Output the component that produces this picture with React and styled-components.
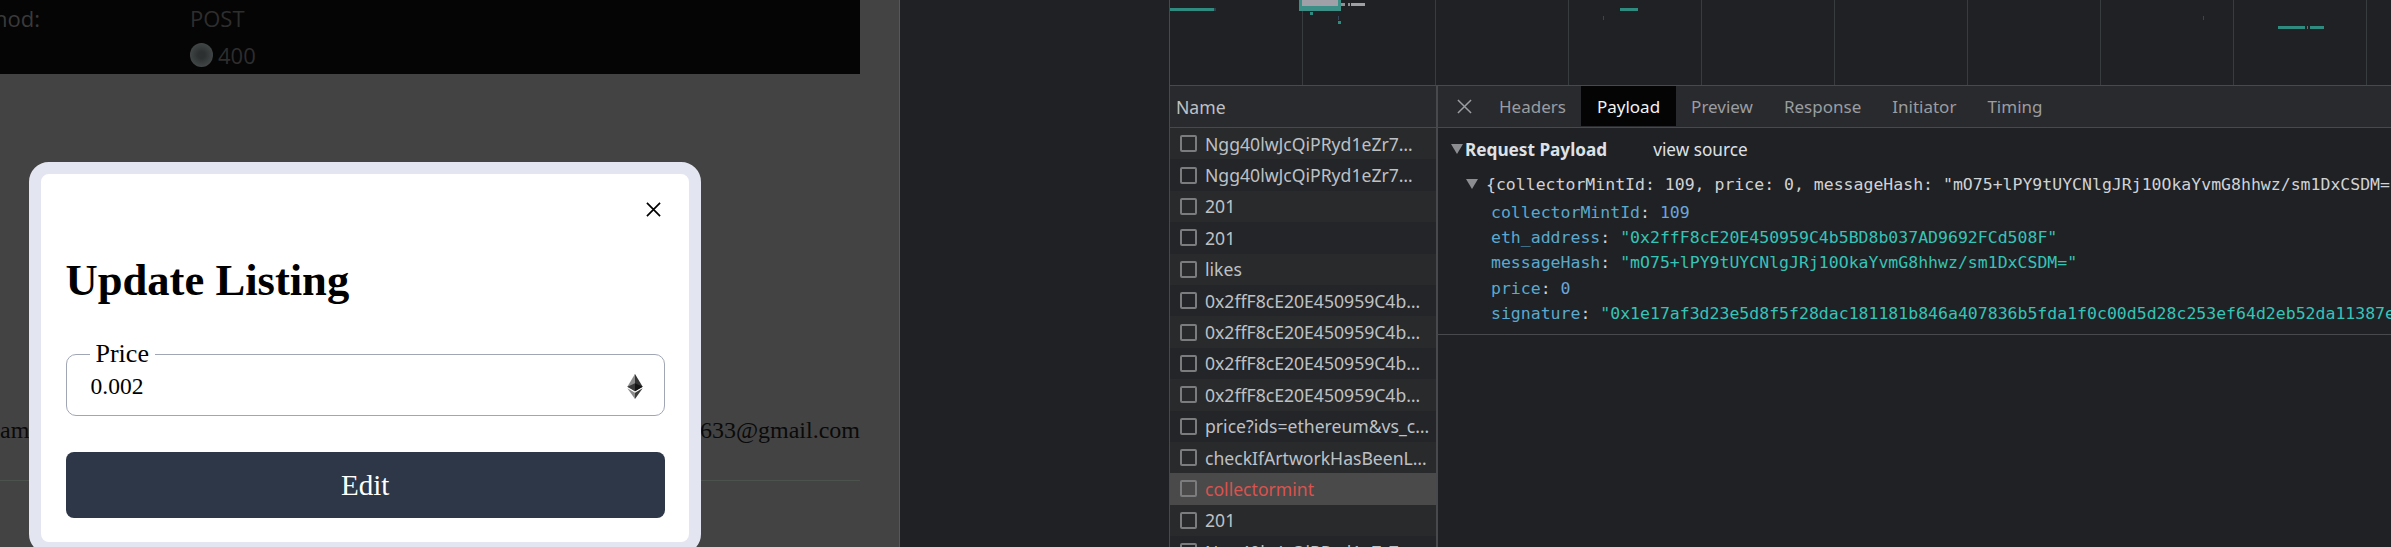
import React from "react";
import styled, { createGlobalStyle } from "styled-components";

const GlobalStyle = createGlobalStyle`
  html, body { margin: 0; padding: 0; background: #202124; }
  * { box-sizing: border-box; }
`;

const Screen = styled.div`
  display: flex;
  width: 2391px;
  height: 547px;
  overflow: hidden;
`;

/* dimmed site on the left */
const Page = styled.div`
  position: relative;
  flex: 0 0 900px;
  height: 100%;
  overflow: hidden;
  background: #434343;
  border-right: 1px solid #55575a;
  font-family: "Liberation Serif", serif;
`;
const InfoStrip = styled.div`
  width: 860px;
  height: 74px;
  padding-top: 1px;
  background: #050505;
  color: #2e2e2e;
  font-family: "Open Sans", sans-serif;
  font-size: 22px;
  line-height: 34px;
`;
const InfoRow = styled.div`
  display: flex;
  align-items: center;
  height: ${({ $tall }) => ($tall ? 39 : 34)}px;
`;
const InfoLabel = styled.div`
  display: flex;
  justify-content: flex-end;
  flex: 0 0 40px;
  min-width: 0;
  margin-right: 150px;
  white-space: nowrap;
  color: #3a3a3a;
`;
const Coin = styled.span`
  width: 23px;
  height: 24px;
  margin-right: 5px;
  border-radius: 50%;
  background: radial-gradient(circle, #2c3031 20%, #444949 80%);
`;
const ContactRow = styled.div`
  display: flex;
  justify-content: space-between;
  width: 860px;
  margin-top: 342px;
  font-size: 24px;
  line-height: 28px;
  color: #0a0a0a;
  white-space: nowrap;
`;
const Divider = styled.div`
  width: 860px;
  height: 1px;
  margin-top: 36px;
  background: #4c524c;
`;

/* modal over the page */
const Modal = styled.div`
  position: absolute;
  left: 29px;
  top: 162px;
  width: 672px;
  height: 392px;
  padding: 0 24px 0 24.5px;
  background: #fff;
  border: 12px solid #e3e6f1;
  border-radius: 20px;
`;
const CloseRow = styled.div`
  display: flex;
  justify-content: flex-end;
  padding: 28px 4px 0 0;
  height: 64px;
`;
const ModalTitle = styled.h2`
  margin: 12px 0 0;
  height: 60px;
  font-size: 44.6px;
  line-height: 60px;
  font-weight: 700;
  color: #000;
`;
const PriceField = styled.fieldset`
  display: flex;
  align-items: center;
  justify-content: space-between;
  margin: 30px 0 0;
  padding: 0 21px 11px 24px;
  height: 76px;
  border: 1px solid #a0a6b4;
  border-radius: 10px;
`;
const PriceLegend = styled.legend`
  margin-left: -1px;
  padding: 0 6px;
  font-size: 26px;
  line-height: 28px;
  color: #000;
`;
const PriceValue = styled.span`
  font-size: 23.5px;
  color: #000;
`;
const EditButton = styled.button`
  display: block;
  width: 100%;
  height: 66px;
  margin-top: 36px;
  border: 0;
  border-radius: 8px;
  background: #2d3748;
  color: #fff;
  font-family: "Liberation Serif", serif;
  font-size: 29px;
`;

const Gutter = styled.div`
  flex: 0 0 269px;
  background: #202124;
`;

/* devtools network panel */
const DevTools = styled.div`
  flex: 1;
  min-width: 0;
  display: flex;
  flex-direction: column;
  background: #202124;
  border-left: 1px solid #47494c;
  color: #bdc1c6;
  font-family: "Noto Sans", sans-serif;
  font-size: 17.6px;
`;
const OverviewChart = styled.svg`
  display: block;
  flex: 0 0 85px;
`;
const Panels = styled.div`
  flex: 1;
  display: flex;
  min-height: 0;
  border-top: 1px solid #47494c;
`;
const NameColumn = styled.div`
  flex: 0 0 268px;
  border-right: 2px solid #47494c;
  overflow: hidden;
`;
const NameHeader = styled.div`
  display: flex;
  align-items: center;
  height: 42px;
  padding-left: 6px;
  background: #292a2d;
  border-bottom: 1px solid #47494c;
`;
const RequestRow = styled.div`
  display: flex;
  align-items: center;
  gap: 8px;
  height: 31.4px;
  padding-left: 10px;
  white-space: nowrap;
  background: ${({ $selected, $odd }) => ($selected ? "#4a4a4a" : $odd ? "#242528" : "#292a2c")};
  color: ${({ $selected }) => ($selected ? "#d9534f" : "#bdc1c6")};
`;
const RowCheck = styled.span`
  flex: 0 0 17px;
  height: 17px;
  border: 2px solid #7b7c7e;
  border-radius: 2px;
`;

const Details = styled.div`
  flex: 1;
  min-width: 0;
  overflow: hidden;
`;
const TabBar = styled.div`
  display: flex;
  align-items: flex-start;
  height: 42px;
  padding-left: 19px;
  background: #292a2d;
  border-bottom: 1px solid #47494c;
  font-size: 17px;
`;
const CloseTab = styled.span`
  display: flex;
  align-items: center;
  height: 40px;
  margin-right: 11.5px;
`;
const Tab = styled.div`
  display: flex;
  align-items: center;
  height: 40px;
  padding: 0 15.5px;
  background: ${({ $active }) => ($active ? "#040404" : "transparent")};
  color: ${({ $active }) => ($active ? "#f1f3f4" : "#9a9da1")};
`;
const SectionTitle = styled.div`
  display: flex;
  align-items: center;
  height: 42px;
  margin-bottom: 2px;
  padding-left: 13px;
  font-size: 17.2px;
`;
const Triangle = styled.span`
  width: 0;
  height: 0;
  border-left: 6px solid transparent;
  border-right: 6px solid transparent;
  border-top: 10px solid #8b8d90;
`;
const TitleText = styled.b`
  margin-left: 2px;
  color: #dfe1e4;
  font-weight: 700;
`;
const ViewSource = styled.span`
  margin-left: 46px;
  color: #dfe1e4;
`;
const CodeBlock = styled.div`
  padding-bottom: 8px;
  border-bottom: 1px solid #47494c;
  font-family: "DejaVu Sans Mono", monospace;
  font-size: 16.5px;
  white-space: nowrap;
`;
const SummaryLine = styled.div`
  display: flex;
  align-items: center;
  gap: 8px;
  height: 24px;
  margin-bottom: 4px;
  padding-left: 28px;
  color: #d0d3d6;
`;
const PropLine = styled.div`
  height: 25.2px;
  line-height: 25.2px;
  padding-left: 53px;
  color: #d0d3d6;
`;
const Key = styled.span`
  color: #5ba9cf;
`;
const NumberValue = styled.span`
  color: #6ba6dc;
`;
const StringValue = styled.span`
  color: #35c4b8;
`;

const gridLines = [1302, 1435, 1568, 1701, 1834, 1967, 2100, 2233, 2366];

const marks = [
  { x: 1170, y: 8, w: 44, h: 3, fill: "#2f8a80" },
  { x: 1214, y: 8, w: 2, h: 3, fill: "#28414a" },
  { x: 1299, y: 0, w: 42, h: 11, fill: "#3b8f87" },
  { x: 1302, y: 0, w: 36, h: 6, fill: "#a0a0a8" },
  { x: 1341, y: 3, w: 4, h: 3, fill: "#8f9094" },
  { x: 1348, y: 3, w: 2, h: 3, fill: "#8f9094" },
  { x: 1351, y: 3, w: 14, h: 3, fill: "#a0a0a4" },
  { x: 1310, y: 12, w: 3, h: 3, fill: "#2f8a80" },
  { x: 1338, y: 21, w: 3, h: 3, fill: "#2f8a80" },
  { x: 1338, y: 16, w: 1, h: 4, fill: "#33455a" },
  { x: 1620, y: 8, w: 18, h: 3, fill: "#2f8a80" },
  { x: 1603, y: 16, w: 1, h: 4, fill: "#33455a" },
  { x: 2203, y: 16, w: 1, h: 4, fill: "#33455a" },
  { x: 2278, y: 26, w: 27, h: 3, fill: "#2f8a80" },
  { x: 2307, y: 26, w: 1, h: 3, fill: "#2f8a80" },
  { x: 2310, y: 26, w: 14, h: 3, fill: "#2f8a80" },
];

const requests = [
  "Ngg40lwJcQiPRyd1eZr7…",
  "Ngg40lwJcQiPRyd1eZr7…",
  "201",
  "201",
  "likes",
  "0x2ffF8cE20E450959C4b…",
  "0x2ffF8cE20E450959C4b…",
  "0x2ffF8cE20E450959C4b…",
  "0x2ffF8cE20E450959C4b…",
  "price?ids=ethereum&vs_c…",
  "checkIfArtworkHasBeenL…",
  "collectormint",
  "201",
  "Ngg40lwJcQiPRyd1eZr7…",
];

const tabs = ["Headers", "Payload", "Preview", "Response", "Initiator", "Timing"];

const CrossIcon = ({ size, color, width }) => (
  <svg width={size} height={size} viewBox="0 0 16 16" fill="none" stroke={color} strokeWidth={width}>
    <path d="M1 1L15 15M15 1L1 15" />
  </svg>
);

const EthIcon = () => (
  <svg width="16" height="25" viewBox="0 0 256 417">
    <polygon fill="#343434" points="127.96,0 125.17,9.5 125.17,285.17 127.96,287.96 255.92,212.32" />
    <polygon fill="#8C8C8C" points="127.96,0 0,212.32 127.96,287.96 127.96,154.16" />
    <polygon fill="#3C3C3B" points="127.96,312.19 126.39,314.1 126.39,412.31 127.96,416.91 256,236.59" />
    <polygon fill="#8C8C8C" points="127.96,416.91 127.96,312.19 0,236.59" />
    <polygon fill="#141414" points="127.96,287.96 255.92,212.32 127.96,154.16" />
    <polygon fill="#393939" points="0,212.32 127.96,287.96 127.96,154.16" />
  </svg>
);

export default function App() {
  return (
    <Screen>
      <GlobalStyle />
      <Page>
        <InfoStrip>
          <InfoRow>
            <InfoLabel>Method:</InfoLabel>
            POST
          </InfoRow>
          <InfoRow $tall>
            <InfoLabel />
            <Coin />
            400
          </InfoRow>
        </InfoStrip>
        <ContactRow>
          <span>am:</span>
          <span>0633@gmail.com</span>
        </ContactRow>
        <Divider />
        <Modal>
          <CloseRow>
            <CrossIcon size={15} color="#000" width={1.8} />
          </CloseRow>
          <ModalTitle>Update Listing</ModalTitle>
          <PriceField>
            <PriceLegend>Price</PriceLegend>
            <PriceValue>0.002</PriceValue>
            <EthIcon />
          </PriceField>
          <EditButton>Edit</EditButton>
        </Modal>
      </Page>
      <Gutter />
      <DevTools>
        <OverviewChart width="1221" height="85" viewBox="1170 0 1221 85">
          {gridLines.map((x) => (
            <rect key={x} x={x} y="0" width="1" height="85" fill="#393c3e" />
          ))}
          {marks.map((m, i) => (
            <rect key={i} x={m.x} y={m.y} width={m.w} height={m.h} fill={m.fill} />
          ))}
        </OverviewChart>
        <Panels>
          <NameColumn>
            <NameHeader>Name</NameHeader>
            {requests.map((name, i) => (
              <RequestRow key={i} $odd={i % 2 === 1} $selected={name === "collectormint"}>
                <RowCheck />
                {name}
              </RequestRow>
            ))}
          </NameColumn>
          <Details>
            <TabBar>
              <CloseTab>
                <CrossIcon size={15} color="#9a9da1" width={1.6} />
              </CloseTab>
              {tabs.map((t) => (
                <Tab key={t} $active={t === "Payload"}>
                  {t}
                </Tab>
              ))}
            </TabBar>
            <SectionTitle>
              <Triangle />
              <TitleText>Request Payload</TitleText>
              <ViewSource>view source</ViewSource>
            </SectionTitle>
            <CodeBlock>
              <SummaryLine>
                <Triangle />
                {'{collectorMintId: 109, price: 0, messageHash: "mO75+lPY9tUYCNlgJRj10OkaYvmG8hhwz/sm1DxCSDM=", eth_address: "0x2ffF8cE20E450959C4b5BD8b037AD9692FCd508F"}'}
              </SummaryLine>
              <PropLine>
                <Key>collectorMintId</Key>: <NumberValue>109</NumberValue>
              </PropLine>
              <PropLine>
                <Key>eth_address</Key>: <StringValue>"0x2ffF8cE20E450959C4b5BD8b037AD9692FCd508F"</StringValue>
              </PropLine>
              <PropLine>
                <Key>messageHash</Key>: <StringValue>"mO75+lPY9tUYCNlgJRj10OkaYvmG8hhwz/sm1DxCSDM="</StringValue>
              </PropLine>
              <PropLine>
                <Key>price</Key>: <NumberValue>0</NumberValue>
              </PropLine>
              <PropLine>
                <Key>signature</Key>: <StringValue>"0x1e17af3d23e5d8f5f28dac181181b846a407836b5fda1f0c00d5d28c253ef64d2eb52da11387e9a1"</StringValue>
              </PropLine>
            </CodeBlock>
          </Details>
        </Panels>
      </DevTools>
    </Screen>
  );
}
